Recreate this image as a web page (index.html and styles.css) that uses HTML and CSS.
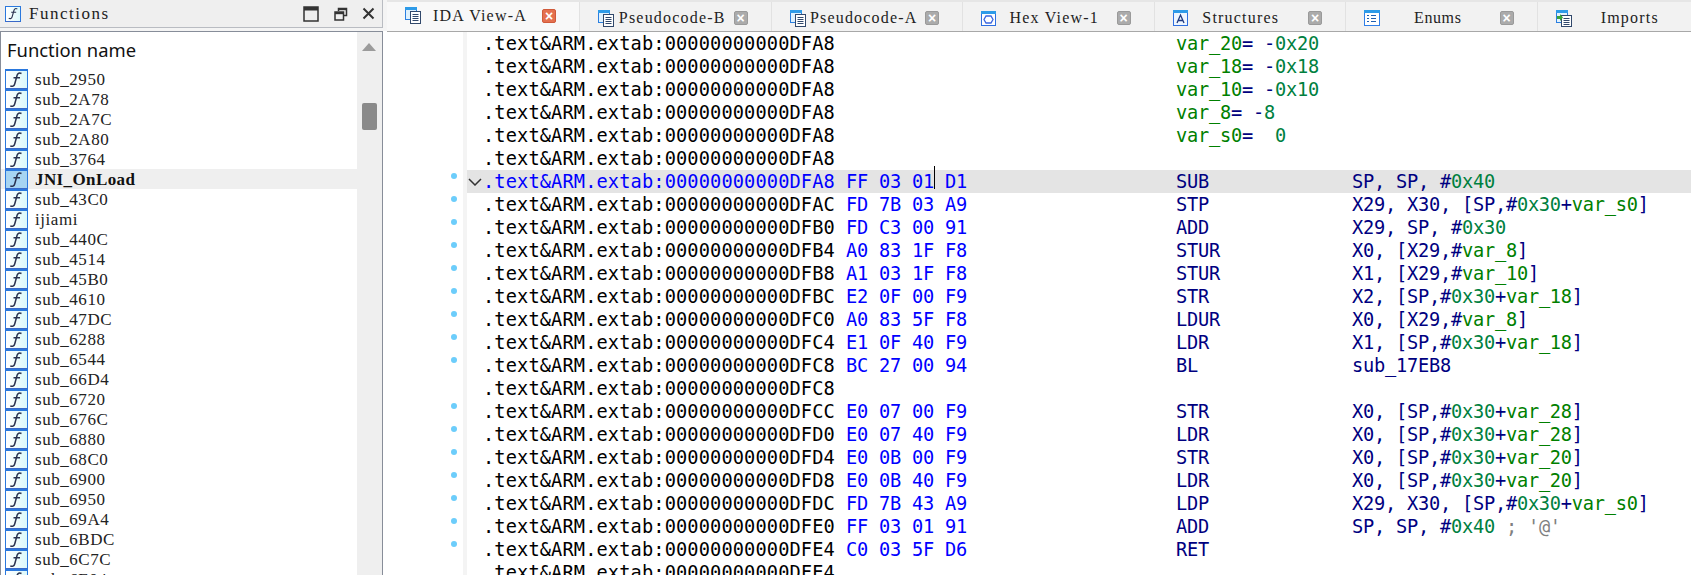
FILE: index.html
```html
<!DOCTYPE html>
<html lang="en">
<head>
<meta charset="utf-8">
<title>IDA View-A</title>
<link rel="stylesheet" href="styles.css">
</head>
<body>
<svg class="defs" width="0" height="0" aria-hidden="true">
  <symbol id="i-f" viewBox="0 0 17 17">
    <path d="M13.500 2.500c-2-1-3.800-.4-4.400 1.800L6.700 13c-.6 2.200-2.400 2.800-4.400 1.800M5.500 6.800h6.500" fill="none" stroke="#2b3350" stroke-width="1.500"/>
  </symbol>
  <symbol id="i-pseudo" viewBox="0 0 17 17">
    <rect x="0.5" y="0.5" width="11" height="12" fill="#dff1fd" stroke="#2b7fe0"/>
    <rect x="0" y="0" width="12" height="3" fill="#2e9be8"/>
    <rect x="5.5" y="4.5" width="10" height="12" fill="#fff" stroke="#31486b"/>
    <path d="M7.5 7.5h6M7.5 9.5h6M7.5 11.5h6M7.5 13.5h6" stroke="#31486b"/>
  </symbol>
  <symbol id="i-hex" viewBox="0 0 15 15">
    <rect x="0.5" y="0.5" width="14" height="14" fill="#fff" stroke="#2f6fe0"/>
    <rect x="0" y="0" width="15" height="3" fill="#2e9be8"/>
    <path d="M5 5h5l2 3.500-2 3.500H5l-2-3.500z" fill="none" stroke="#3a66e0" stroke-width="1.300"/>
  </symbol>
  <symbol id="i-struct" viewBox="0 0 15 16">
    <rect x="0.500" y="0.500" width="14" height="15" fill="#eef6ff" stroke="#2f6fe0"/>
    <rect x="0" y="0" width="15" height="3" fill="#2e9be8"/>
    <path d="M4 13l3.500-8 3.500 8M5.500 10.500h4" fill="none" stroke="#1f3a80" stroke-width="1.300"/>
  </symbol>
  <symbol id="i-enum" viewBox="0 0 16 16">
    <rect x="0.500" y="0.500" width="15" height="15" fill="#fff" stroke="#2f7fe8"/>
    <rect x="0" y="0" width="16" height="3" fill="#2e9be8"/>
    <path d="M3 5.500h2M7 5.500h5M3 8.500h2M7 8.500h5M3 11.500h2M7 11.500h5" stroke="#1f5fb0"/>
  </symbol>
  <symbol id="i-import" viewBox="0 0 17 17">
    <rect x="0.500" y="0.500" width="11" height="12" fill="#e4f2fd" stroke="#2b7fe0"/>
    <rect x="0" y="0" width="12" height="3" fill="#2e9be8"/>
    <rect x="5.500" y="5.500" width="10" height="11" fill="#fff" stroke="#31486b"/>
    <path d="M7.500 8.500h6M7.500 10.500h6M7.500 12.500h6M7.500 14.500h6" stroke="#31486b"/>
    <path d="M1 6h3V4l3 3.500L4 11V9H1z" fill="#3aa53a"/>
  </symbol>
</svg>

<div class="app">
  <aside class="side">
    <header class="side-head">
      <span class="f-icon f-small"><svg width="13" height="13"><use href="#i-f"/></svg></span>
      <span class="side-title">Functions</span>
      <span class="win-btns">
        <svg class="win-btn" width="16" height="16" viewBox="0 0 16 16"><rect x="1" y="1" width="14" height="14" fill="none" stroke="#333" stroke-width="1.500"/><rect x="1" y="1" width="14" height="3.500" fill="#333"/></svg>
        <svg class="win-btn" width="14" height="14" viewBox="0 0 14 14"><path d="M4.500 4V1.500h8v7H10" fill="none" stroke="#333" stroke-width="1.500"/><rect x="4" y="1" width="9" height="2.200" fill="#333"/><rect x="1" y="5" width="8.500" height="8" fill="none" stroke="#333" stroke-width="1.500"/><rect x="1" y="5" width="8.500" height="2.200" fill="#333"/></svg>
        <svg class="win-btn" width="13" height="13" viewBox="0 0 13 13"><path d="M1.500 1.500l10 10M11.500 1.500l-10 10" stroke="#333" stroke-width="2"/></svg>
      </span>
    </header>
    <section class="list-panel">
      <div class="list-main">
        <div class="list-title">Function name</div>
        <ul class="fn-list">
          <li class="fn"><span class="f-icon"><svg width="17" height="17"><use href="#i-f"/></svg></span>sub_2950</li>
          <li class="fn"><span class="f-icon"><svg width="17" height="17"><use href="#i-f"/></svg></span>sub_2A78</li>
          <li class="fn"><span class="f-icon"><svg width="17" height="17"><use href="#i-f"/></svg></span>sub_2A7C</li>
          <li class="fn"><span class="f-icon"><svg width="17" height="17"><use href="#i-f"/></svg></span>sub_2A80</li>
          <li class="fn"><span class="f-icon"><svg width="17" height="17"><use href="#i-f"/></svg></span>sub_3764</li>
          <li class="fn fn-active"><span class="f-icon"><svg width="17" height="17"><use href="#i-f"/></svg></span>JNI_OnLoad</li>
          <li class="fn"><span class="f-icon"><svg width="17" height="17"><use href="#i-f"/></svg></span>sub_43C0</li>
          <li class="fn"><span class="f-icon"><svg width="17" height="17"><use href="#i-f"/></svg></span>ijiami</li>
          <li class="fn"><span class="f-icon"><svg width="17" height="17"><use href="#i-f"/></svg></span>sub_440C</li>
          <li class="fn"><span class="f-icon"><svg width="17" height="17"><use href="#i-f"/></svg></span>sub_4514</li>
          <li class="fn"><span class="f-icon"><svg width="17" height="17"><use href="#i-f"/></svg></span>sub_45B0</li>
          <li class="fn"><span class="f-icon"><svg width="17" height="17"><use href="#i-f"/></svg></span>sub_4610</li>
          <li class="fn"><span class="f-icon"><svg width="17" height="17"><use href="#i-f"/></svg></span>sub_47DC</li>
          <li class="fn"><span class="f-icon"><svg width="17" height="17"><use href="#i-f"/></svg></span>sub_6288</li>
          <li class="fn"><span class="f-icon"><svg width="17" height="17"><use href="#i-f"/></svg></span>sub_6544</li>
          <li class="fn"><span class="f-icon"><svg width="17" height="17"><use href="#i-f"/></svg></span>sub_66D4</li>
          <li class="fn"><span class="f-icon"><svg width="17" height="17"><use href="#i-f"/></svg></span>sub_6720</li>
          <li class="fn"><span class="f-icon"><svg width="17" height="17"><use href="#i-f"/></svg></span>sub_676C</li>
          <li class="fn"><span class="f-icon"><svg width="17" height="17"><use href="#i-f"/></svg></span>sub_6880</li>
          <li class="fn"><span class="f-icon"><svg width="17" height="17"><use href="#i-f"/></svg></span>sub_68C0</li>
          <li class="fn"><span class="f-icon"><svg width="17" height="17"><use href="#i-f"/></svg></span>sub_6900</li>
          <li class="fn"><span class="f-icon"><svg width="17" height="17"><use href="#i-f"/></svg></span>sub_6950</li>
          <li class="fn"><span class="f-icon"><svg width="17" height="17"><use href="#i-f"/></svg></span>sub_69A4</li>
          <li class="fn"><span class="f-icon"><svg width="17" height="17"><use href="#i-f"/></svg></span>sub_6BDC</li>
          <li class="fn"><span class="f-icon"><svg width="17" height="17"><use href="#i-f"/></svg></span>sub_6C7C</li>
          <li class="fn"><span class="f-icon"><svg width="17" height="17"><use href="#i-f"/></svg></span>sub_6E04</li>
        </ul>
      </div>
      <div class="scrollbar">
        <span class="scroll-up"></span>
        <span class="scroll-thumb"></span>
      </div>
    </section>
  </aside>

  <main class="main">
    <nav class="tabs">
      <div class="tab tab-active"><svg class="tab-icon" width="17" height="17"><use href="#i-pseudo"/></svg><span class="tab-label">IDA View-A</span><span class="tab-close close-red">×</span></div>
      <div class="tab"><svg class="tab-icon" width="17" height="17"><use href="#i-pseudo"/></svg><span class="tab-label">Pseudocode-B</span><span class="tab-close">×</span></div>
      <div class="tab"><svg class="tab-icon" width="17" height="17"><use href="#i-pseudo"/></svg><span class="tab-label">Pseudocode-A</span><span class="tab-close">×</span></div>
      <div class="tab"><svg class="tab-icon" width="15" height="15"><use href="#i-hex"/></svg><span class="tab-label">Hex View-1</span><span class="tab-close">×</span></div>
      <div class="tab tab-struct"><svg class="tab-icon" width="15" height="16"><use href="#i-struct"/></svg><span class="tab-label">Structures</span><span class="tab-close">×</span></div>
      <div class="tab tab-enums"><svg class="tab-icon" width="16" height="16"><use href="#i-enum"/></svg><span class="tab-label">Enums</span><span class="tab-close">×</span></div>
      <div class="tab"><svg class="tab-icon" width="17" height="17"><use href="#i-import"/></svg><span class="tab-label">Imports</span><span class="tab-close">×</span></div>
    </nav>
    <div class="listing">
      <div class="row"><span class="gutter"></span><span class="strip"></span><span class="arrow"></span><span class="addr">.text&amp;ARM.extab:00000000000DFA8</span><span class="bytes"></span><span class="mn"><span class="g">var_20</span>= -<span class="h">0x20</span></span></div>
      <div class="row"><span class="gutter"></span><span class="strip"></span><span class="arrow"></span><span class="addr">.text&amp;ARM.extab:00000000000DFA8</span><span class="bytes"></span><span class="mn"><span class="g">var_18</span>= -<span class="h">0x18</span></span></div>
      <div class="row"><span class="gutter"></span><span class="strip"></span><span class="arrow"></span><span class="addr">.text&amp;ARM.extab:00000000000DFA8</span><span class="bytes"></span><span class="mn"><span class="g">var_10</span>= -<span class="h">0x10</span></span></div>
      <div class="row"><span class="gutter"></span><span class="strip"></span><span class="arrow"></span><span class="addr">.text&amp;ARM.extab:00000000000DFA8</span><span class="bytes"></span><span class="mn"><span class="g">var_8</span>= -<span class="h">8</span></span></div>
      <div class="row"><span class="gutter"></span><span class="strip"></span><span class="arrow"></span><span class="addr">.text&amp;ARM.extab:00000000000DFA8</span><span class="bytes"></span><span class="mn"><span class="g">var_s0</span>=  <span class="h">0</span></span></div>
      <div class="row"><span class="gutter"></span><span class="strip"></span><span class="arrow"></span><span class="addr">.text&amp;ARM.extab:00000000000DFA8</span></div>
      <div class="row row-current"><span class="gutter dot"></span><span class="strip"></span><span class="arrow"><svg width="14" height="8" viewBox="0 0 14 8"><path d="M1 1l6 6 6-6" fill="none" stroke="#333" stroke-width="1.500"/></svg></span><span class="addr">.text&amp;ARM.extab:00000000000DFA8</span><span class="bytes">FF 03 01<span class="caret"></span> D1</span><span class="mn">SUB</span><span class="ops">SP, SP, #<span class="h">0x40</span></span></div>
      <div class="row"><span class="gutter dot"></span><span class="strip"></span><span class="arrow"></span><span class="addr">.text&amp;ARM.extab:00000000000DFAC</span><span class="bytes">FD 7B 03 A9</span><span class="mn">STP</span><span class="ops">X29, X30, [SP,#<span class="h">0x30</span>+<span class="g">var_s0</span>]</span></div>
      <div class="row"><span class="gutter dot"></span><span class="strip"></span><span class="arrow"></span><span class="addr">.text&amp;ARM.extab:00000000000DFB0</span><span class="bytes">FD C3 00 91</span><span class="mn">ADD</span><span class="ops">X29, SP, #<span class="h">0x30</span></span></div>
      <div class="row"><span class="gutter dot"></span><span class="strip"></span><span class="arrow"></span><span class="addr">.text&amp;ARM.extab:00000000000DFB4</span><span class="bytes">A0 83 1F F8</span><span class="mn">STUR</span><span class="ops">X0, [X29,#<span class="g">var_8</span>]</span></div>
      <div class="row"><span class="gutter dot"></span><span class="strip"></span><span class="arrow"></span><span class="addr">.text&amp;ARM.extab:00000000000DFB8</span><span class="bytes">A1 03 1F F8</span><span class="mn">STUR</span><span class="ops">X1, [X29,#<span class="g">var_10</span>]</span></div>
      <div class="row"><span class="gutter dot"></span><span class="strip"></span><span class="arrow"></span><span class="addr">.text&amp;ARM.extab:00000000000DFBC</span><span class="bytes">E2 0F 00 F9</span><span class="mn">STR</span><span class="ops">X2, [SP,#<span class="h">0x30</span>+<span class="g">var_18</span>]</span></div>
      <div class="row"><span class="gutter dot"></span><span class="strip"></span><span class="arrow"></span><span class="addr">.text&amp;ARM.extab:00000000000DFC0</span><span class="bytes">A0 83 5F F8</span><span class="mn">LDUR</span><span class="ops">X0, [X29,#<span class="g">var_8</span>]</span></div>
      <div class="row"><span class="gutter dot"></span><span class="strip"></span><span class="arrow"></span><span class="addr">.text&amp;ARM.extab:00000000000DFC4</span><span class="bytes">E1 0F 40 F9</span><span class="mn">LDR</span><span class="ops">X1, [SP,#<span class="h">0x30</span>+<span class="g">var_18</span>]</span></div>
      <div class="row"><span class="gutter dot"></span><span class="strip"></span><span class="arrow"></span><span class="addr">.text&amp;ARM.extab:00000000000DFC8</span><span class="bytes">BC 27 00 94</span><span class="mn">BL</span><span class="ops">sub_17EB8</span></div>
      <div class="row"><span class="gutter"></span><span class="strip"></span><span class="arrow"></span><span class="addr">.text&amp;ARM.extab:00000000000DFC8</span></div>
      <div class="row"><span class="gutter dot"></span><span class="strip"></span><span class="arrow"></span><span class="addr">.text&amp;ARM.extab:00000000000DFCC</span><span class="bytes">E0 07 00 F9</span><span class="mn">STR</span><span class="ops">X0, [SP,#<span class="h">0x30</span>+<span class="g">var_28</span>]</span></div>
      <div class="row"><span class="gutter dot"></span><span class="strip"></span><span class="arrow"></span><span class="addr">.text&amp;ARM.extab:00000000000DFD0</span><span class="bytes">E0 07 40 F9</span><span class="mn">LDR</span><span class="ops">X0, [SP,#<span class="h">0x30</span>+<span class="g">var_28</span>]</span></div>
      <div class="row"><span class="gutter dot"></span><span class="strip"></span><span class="arrow"></span><span class="addr">.text&amp;ARM.extab:00000000000DFD4</span><span class="bytes">E0 0B 00 F9</span><span class="mn">STR</span><span class="ops">X0, [SP,#<span class="h">0x30</span>+<span class="g">var_20</span>]</span></div>
      <div class="row"><span class="gutter dot"></span><span class="strip"></span><span class="arrow"></span><span class="addr">.text&amp;ARM.extab:00000000000DFD8</span><span class="bytes">E0 0B 40 F9</span><span class="mn">LDR</span><span class="ops">X0, [SP,#<span class="h">0x30</span>+<span class="g">var_20</span>]</span></div>
      <div class="row"><span class="gutter dot"></span><span class="strip"></span><span class="arrow"></span><span class="addr">.text&amp;ARM.extab:00000000000DFDC</span><span class="bytes">FD 7B 43 A9</span><span class="mn">LDP</span><span class="ops">X29, X30, [SP,#<span class="h">0x30</span>+<span class="g">var_s0</span>]</span></div>
      <div class="row"><span class="gutter dot"></span><span class="strip"></span><span class="arrow"></span><span class="addr">.text&amp;ARM.extab:00000000000DFE0</span><span class="bytes">FF 03 01 91</span><span class="mn">ADD</span><span class="ops">SP, SP, #<span class="h">0x40</span> <span class="c">; '@'</span></span></div>
      <div class="row"><span class="gutter dot"></span><span class="strip"></span><span class="arrow"></span><span class="addr">.text&amp;ARM.extab:00000000000DFE4</span><span class="bytes">C0 03 5F D6</span><span class="mn">RET</span></div>
      <div class="row"><span class="gutter"></span><span class="strip"></span><span class="arrow"></span><span class="addr">.text&amp;ARM.extab:00000000000DFE4</span></div>
    </div>
  </main>
</div>
</body>
</html>
```
FILE: styles.css
```css
* { box-sizing: border-box; }
html, body { margin: 0; padding: 0; height: 575px; overflow: hidden; background: #fff; }
.defs { position: absolute; }
.app { display: flex; width: 1691px; height: 575px; overflow: hidden; }

/* Left dock */
.side { width: 387px; flex: none; display: flex; flex-direction: column; padding-right: 4px; background: linear-gradient(#f4f4f4 31px, #fff 31px); }
.side-head { height: 28px; flex: none; display: flex; align-items: center; padding-left: 5px; background: #efefef; border-right: 1px solid #b9bcc2; border-bottom: 1px solid #b9bcc2; font: 17px "Liberation Serif", serif; letter-spacing: 1.5px; color: #222; }
.side-title { margin-left: 8px; }
.win-btns { margin-left: auto; display: flex; align-items: center; padding-right: 7px; }
.win-btn { display: block; flex: none; }
.win-btn:nth-child(1) { margin-right: 15px; }
.win-btn:nth-child(2) { margin-right: 14px; }

.list-panel { flex: 1; min-height: 0; margin-top: 3px; display: flex; border: 1px solid #878d99; border-bottom: 0; background: #fff; overflow: hidden; }
.list-main { flex: 1; min-width: 0; }
.list-title { height: 37px; padding: 6px 0 0 6px; font: 18.4px/24px "Noto Sans", sans-serif; color: #111; }
.fn-list { list-style: none; margin: 0; padding: 0; }
.fn { height: 20px; display: flex; align-items: center; padding: 1px 0 0 4px; font: 17px/20px "Liberation Serif", serif; letter-spacing: 0.55px; color: #222; }
.fn-active { background: #efefef; font-weight: 700; letter-spacing: 0.4px; color: #111; }
.f-icon { flex: none; width: 23px; height: 20px; margin: -1px 7px 0 0; display: flex; align-items: center; justify-content: center; border: 1px solid #2a78dd; border-top-width: 2px; border-bottom-color: #3a68c8; background: linear-gradient(90deg, #fff, #dcf9fb); }
.f-icon svg { display: block; flex: none; }
.fn-active .f-icon { background: #a6d4f2; }
.f-small { width: 16px; height: 16px; margin: 0; border-width: 1px; }

.scrollbar { position: relative; width: 25px; flex: none; background: #efefef; }
.scroll-up { display: block; width: 0; margin: 11px 0 0 5px; border-left: 7px solid transparent; border-right: 7px solid transparent; border-bottom: 8px solid #9b9b9b; }
.scroll-thumb { display: block; width: 15px; height: 27px; margin: 52px 0 0 5px; border-radius: 2px; background: #8a8a8a; }

/* Main view */
.main { flex: 1; min-width: 0; display: flex; flex-direction: column; }
.tabs { height: 32px; flex: none; display: flex; overflow: hidden; background: #f2f2f2; border-top: 2px solid #e6e6e6; border-bottom: 1px solid #a8a8a8; }
.tab { width: 191.500px; flex: none; height: 30px; padding: 2px 0 0 18px; display: flex; align-items: center; font: 16px "Liberation Serif", serif; letter-spacing: 1.200px; color: #222; border-right: 1px solid #e2e2e2; background: #f2f2f2; }
.tab-active { width: 193px; height: 31px; margin-top: -2px; padding-top: 0; background: #f8f8f8; }
.tab-icon { flex: none; display: block; }
.tab-label { flex: 1; text-align: center; white-space: nowrap; padding-right: 4px; }
.tab-struct .tab-label { padding-right: 14px; }
.tab-enums .tab-label { letter-spacing: 0.600px; }
.tab-close { flex: none; width: 14px; height: 14px; margin-right: 23px; display: flex; align-items: center; justify-content: center; border-radius: 2px; background: #ababab; border: 1px solid #9a9a9a; color: #fff; font: 700 14px/1 "Liberation Sans", sans-serif; letter-spacing: 0; }
.close-red { background: #e4704f; border-color: #d05a3a; }

.listing { flex: 1; min-height: 0; overflow: hidden; font: 18.67px/23px "DejaVu Sans Mono", monospace; letter-spacing: -0.240px; color: #000; }
.row { height: 23px; display: flex; white-space: pre; }
.gutter { width: 76px; flex: none; background: #fff; }
.gutter.dot::after { content: ""; display: block; width: 6px; height: 6px; margin: 3px 0 0 64px; border-radius: 50%; background: #6ccdfb; }
.strip { width: 4px; flex: none; background: #f4f4f4; }
.arrow { width: 16px; flex: none; display: flex; align-items: center; justify-content: flex-start; padding-left: 1px; }
.addr { width: 363px; flex: none; letter-spacing: 0.120px; }
.bytes { width: 330px; flex: none; color: #00f; position: relative; }
.mn { width: 176px; flex: none; color: #000080; }
.ops { flex: none; color: #000080; }
.row-current .arrow, .row-current .addr, .row-current .bytes, .row-current .mn, .row-current .ops { background: #e4e4e4; }
.row-current .ops { flex: 1; }
.row-current .addr { color: #00f; }
.caret { position: relative; }
.caret::after { content: ""; position: absolute; top: -5px; left: 0; width: 1px; height: 23px; background: #000; }
.g { color: #008000; }
.h { color: #008040; }
.c { color: #808080; }
```
